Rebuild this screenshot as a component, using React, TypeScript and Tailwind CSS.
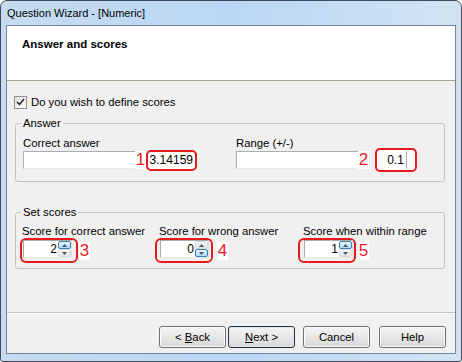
import React from "react";

type Side = "up" | "down";

function Arrow({ dir }: { dir: Side }) {
  return (
    <svg width="5" height="3" viewBox="0 0 5 3">
      <path d={dir === "up" ? "M0 3 L2.5 0 L5 3 Z" : "M0 0 L2.5 3 L5 0 Z"} fill="#44566f" />
    </svg>
  );
}

function SpinBtn({ dir, active }: { dir: Side; active: boolean }) {
  return (
    <div
      className={
        active
          ? "flex-1 flex items-center justify-center rounded-[2px] border border-[#3c7fb1] bg-gradient-to-b from-[#e9f6fd] to-[#b6ddf4]"
          : "flex-1 flex items-center justify-center rounded-[2px] border border-[#dadada] bg-gradient-to-b from-[#f7f7f7] to-[#e3e3e3]"
      }
    >
      <Arrow dir={dir} />
    </div>
  );
}

function Spinner({ value, hot }: { value: string; hot: Side }) {
  return (
    <div className="w-[49px] h-[18px] flex bg-white border border-[#abadb3] border-b-[#e3e9ef] border-r-[#dbdfe6]">
      <span className="flex-1 text-right text-[12px] leading-[16px] pr-[1px] text-black">{value}</span>
      <div className="w-[13px] flex flex-col">
        <SpinBtn dir="up" active={hot === "up"} />
        <SpinBtn dir="down" active={hot === "down"} />
      </div>
    </div>
  );
}

function Mark({ n, className }: { n: string; className?: string }) {
  return (
    <span className={`bg-white text-[#ec1c24] text-[17px] leading-[18px] w-[11px] text-center ${className ?? ""}`}>
      {n}
    </span>
  );
}

function Btn({ children, primary }: { children: React.ReactNode; primary?: boolean }) {
  return (
    <div
      className={
        primary
          ? "w-[67px] h-[22px] flex items-center justify-center rounded-[3px] border border-[#2f2f2f] shadow-[inset_0_0_0_1px_#d6e9f6] bg-gradient-to-b from-[#f4f4f4] to-[#d9d9d9]"
          : "w-[67px] h-[22px] flex items-center justify-center rounded-[3px] border border-[#707070] shadow-[inset_0_0_0_1px_#fbfbfb] bg-gradient-to-b from-[#f4f4f4] to-[#d9d9d9]"
      }
    >
      {children}
    </div>
  );
}

export default function App(): React.ReactElement {
  return (
    <div className="w-[462px] h-[362px] flex flex-col border border-[#3d4a5b] rounded-t-[7px] rounded-b-[3px] bg-gradient-to-r from-[#c6dbef] via-[#b9d7f5] to-[#d3e3f3] font-['Liberation_Sans',Arial,sans-serif] text-[11.3px] text-black">
      {/* title bar */}
      <div className="h-[24px] flex items-center pl-[6px] text-[11px] leading-[14px]">Question Wizard - [Numeric]</div>

      {/* client */}
      <div className="flex-1 flex flex-col mx-[5px] mb-[7px] border border-[#72879f] bg-[#f0f0f0]">
        <div className="h-[55px] bg-white border-b border-[#a7a38f] pl-[15px] pt-[10px]">
          <div className="font-bold text-[11.5px] leading-[16px]">Answer and scores</div>
        </div>

        <div className="flex items-center h-[16px] mt-[13px] ml-[7px] gap-[4px]">
          <div className="w-[13px] h-[13px] border border-[#8e8f8f] bg-gradient-to-br from-[#dedede] to-white flex items-center justify-center">
            <svg width="9" height="8" viewBox="0 0 9 8">
              <path d="M1 4 L3.5 6.5 L8 1" stroke="#1a1a1a" strokeWidth="1.4" fill="none" />
            </svg>
          </div>
          <span className="leading-[14px]">Do you wish to define scores</span>
        </div>

        <fieldset className="mt-[6px] ml-[8px] mr-[10px] border border-[#c3c3c3] rounded-[3px]">
          <legend className="ml-[5px] px-[2px] leading-[14px]">Answer</legend>
          <div className="flex pl-[7px] pt-[6px] pb-[11px]">
            <div className="w-[213px]">
              <div className="leading-[14px]">Correct answer</div>
              <div className="flex items-center h-[20px]">
                <div className="w-[112px] h-[18px] bg-white border border-[#abadb3] border-b-[#e3e9ef] border-r-0" />
                <Mark n="1" className="h-[18px]" />
                <div className="w-[51px] h-[21px] border-2 border-[#e41b1b] rounded-[5px] bg-white flex items-center justify-end pr-[2px] text-[12px] leading-[14px]">
                  3.14159
                </div>
              </div>
            </div>
            <div>
              <div className="leading-[14px]">Range (+/-)</div>
              <div className="flex items-center h-[20px]">
                <div className="w-[122px] h-[18px] bg-white border border-[#abadb3] border-b-[#e3e9ef] border-r-0" />
                <Mark n="2" className="h-[18px]" />
                <div className="ml-[6px] w-[42px] h-[24px] border-2 border-[#e41b1b] rounded-[5px] bg-white flex items-center">
                  <div className="ml-[2px] w-[28px] h-[18px] border-r border-[#abadb3] text-right pr-[2px] text-[12px] leading-[18px]">0.1</div>
                </div>
              </div>
            </div>
          </div>
        </fieldset>

        <fieldset className="mt-[23px] ml-[8px] mr-[10px] border border-[#c3c3c3] rounded-[3px]">
          <legend className="ml-[5px] px-[2px] leading-[14px]">Set scores</legend>
          <div className="flex pl-[6px] pt-[5px] pb-[5px]">
            <div className="w-[137px]">
              <div className="leading-[14px]">Score for correct answer</div>
              <div className="flex items-center">
                <div className="-ml-[2px] w-[58px] h-[25px] border-2 border-[#e41b1b] rounded-[6px] pl-[1px]">
                  <Spinner value="2" hot="up" />
                </div>
                <Mark n="3" className="ml-[1px]" />
              </div>
            </div>
            <div className="w-[144px]">
              <div className="leading-[14px]">Score for wrong answer</div>
              <div className="flex items-center">
                <div className="-ml-[4px] w-[58px] h-[25px] border-2 border-[#e41b1b] rounded-[6px] pl-[3px]">
                  <Spinner value="0" hot="down" />
                </div>
                <Mark n="4" className="ml-[4px]" />
              </div>
            </div>
            <div>
              <div className="leading-[14px]">Score when within range</div>
              <div className="flex items-center">
                <div className="-ml-[5px] w-[58px] h-[25px] border-2 border-[#e41b1b] rounded-[6px] pl-[4px]">
                  <Spinner value="1" hot="up" />
                </div>
                <Mark n="5" className="ml-[2px]" />
              </div>
            </div>
          </div>
        </fieldset>

        <div className="flex-1" />
        <div className="h-[2px] border-t border-[#c4c4c4] border-b border-b-white" />
        <div className="flex justify-end items-center mt-[12px] mb-[5px] pr-[9px]">
          <Btn>
            &lt;&nbsp;<span className="underline">B</span>ack
          </Btn>
          <div className="ml-[2px]">
            <Btn primary>
              <span className="underline">N</span>ext &gt;
            </Btn>
          </div>
          <div className="ml-[8px]">
            <Btn>Cancel</Btn>
          </div>
          <div className="ml-[9px]">
            <Btn>Help</Btn>
          </div>
        </div>
      </div>
    </div>
  );
}
